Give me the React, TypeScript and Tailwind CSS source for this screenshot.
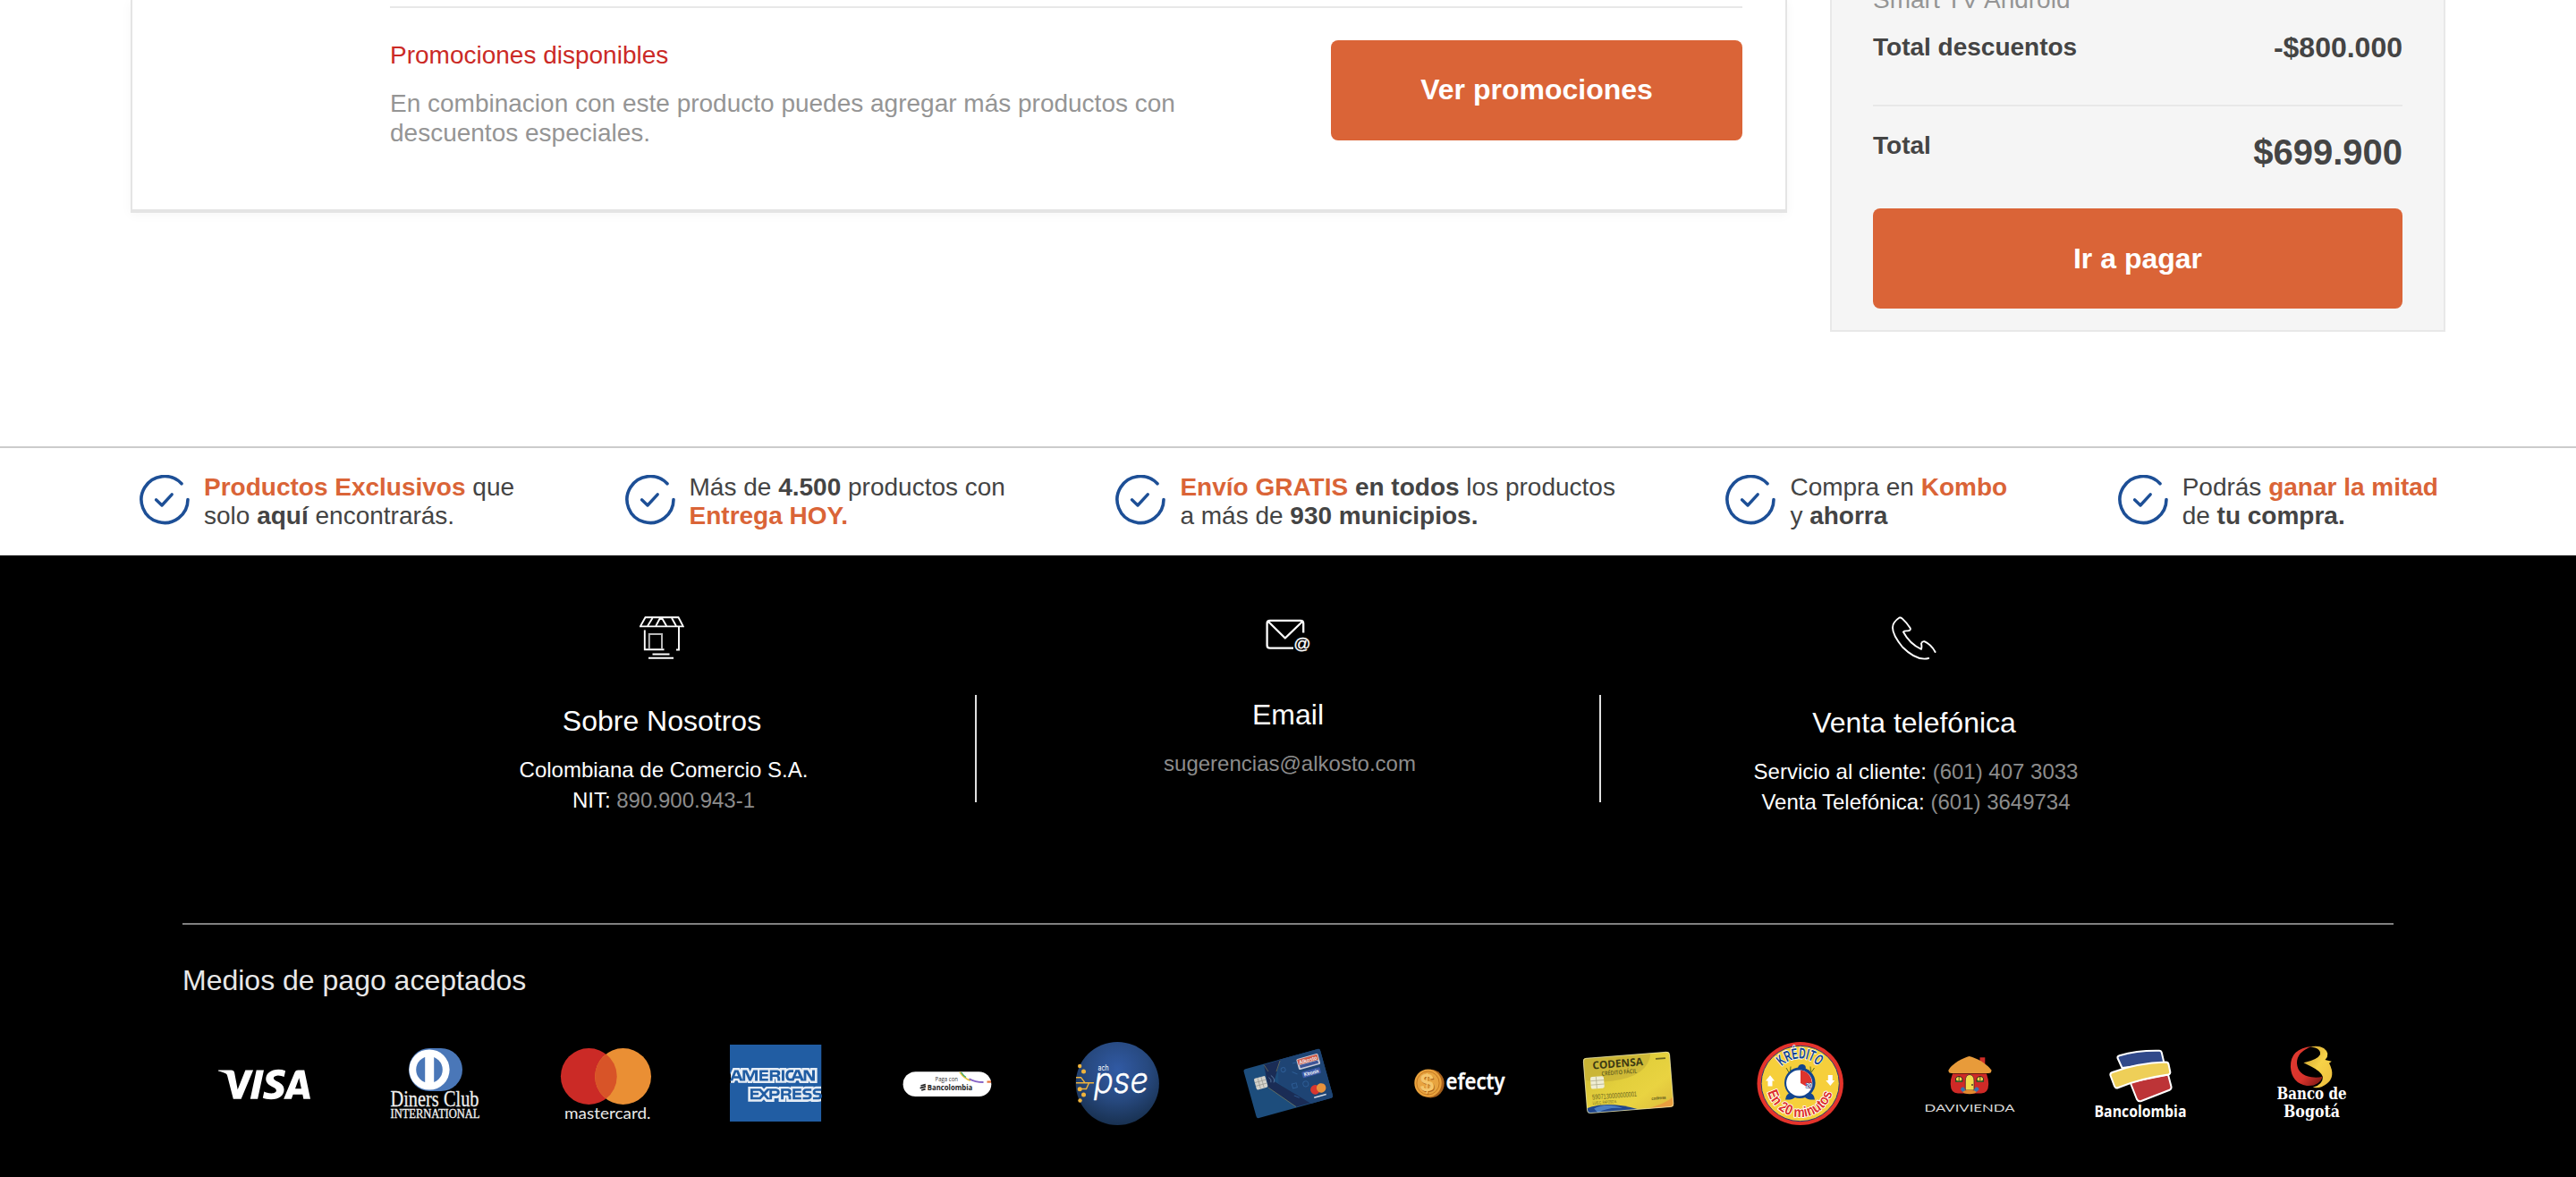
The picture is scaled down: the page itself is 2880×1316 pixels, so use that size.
import type { ReactNode } from "react";
import { SiVisa, SiAmericanexpress } from "react-icons/si";

function CheckIcon() {
  return (
    <svg className="mt-[3px] h-14 w-14 shrink-0" viewBox="0 0 56 56" fill="none" stroke="#1d4f96" strokeLinecap="round" strokeLinejoin="round">
      <path d="M47 9.8 A26 26 0 1 0 54 27.6" strokeWidth="3.6" />
      <path d="M18.5 27.8 L25 34 L36.2 21.8" strokeWidth="3.4" />
    </svg>
  );
}

function Benefit({ children }: { children: ReactNode }) {
  return (
    <li className="flex items-start gap-4">
      <CheckIcon />
      <p className="mt-px whitespace-nowrap text-[28px] leading-8">{children}</p>
    </li>
  );
}

function Accent({ children }: { children: ReactNode }) {
  return <b className="font-bold text-[#da6437]">{children}</b>;
}

function StoreIcon() {
  return (
    <svg className="h-12 w-[50px]" viewBox="0 0 50 48" fill="none" stroke="#fff" strokeWidth="1.9">
      <path d="M6.5 1.3H43.5L48.8 11.4H.9Z" />
      <path d="M14.5 2L9 11M23 2L18.2 11M25 2L30.2 11M36 2L41 11M24 2V4" />
      <path d="M5.8 15.5V37.2H27.5M44 12V37.5H41" />
      <path d="M10.8 36V20H25V36" stroke="#b8b8b8" strokeWidth="2" />
      <path d="M14.5 42.5H33.5M10 46.8H38" />
    </svg>
  );
}

function MailIcon() {
  return (
    <svg className="h-[42px] w-[50px]" viewBox="0 0 50 42" fill="none" stroke="#fff" strokeWidth="2.3" strokeLinejoin="round">
      <path d="M42.2 18.5V8Q42.2 4.8 39 4.8H4.8Q1.6 4.8 1.6 8V32.4Q1.6 35.6 4.8 35.6H31" />
      <path d="M3 6L21.8 24.5L41 6" />
      <text x="31.2" y="36.5" fontSize="19" fill="#fff" stroke="#fff" strokeWidth=".3" fontFamily="Liberation Sans, sans-serif">@</text>
    </svg>
  );
}

function PhoneIcon() {
  return (
    <svg className="h-[50px] w-[50px]" viewBox="0 0 50 50" fill="none" stroke="#fff" strokeWidth="1.9" strokeLinecap="round" strokeLinejoin="round">
      <path d="M41.2 47Q28 50.5 12 34.5Q-3.5 15.5 2.8 7Q5 3.800 8.300 1.700Q9.800 1 11.500 2.400Q17 7.500 20.500 13Q22 16 17.500 16.400Q14 16.200 12.900 17.500Q20 31 33 36.800Q33.800 34 33 30.500Q34 27.800 36.500 28.200Q44 31.500 48.600 40" />
    </svg>
  );
}

function Logo({ children, label }: { children: ReactNode; label: string }) {
  return (
    <li className="flex flex-1 justify-center">
      <svg className="h-[110px] w-[110px] overflow-visible" viewBox="0 0 110 110" role="img" aria-label={label}>
        {children}
      </svg>
    </li>
  );
}

function Visa() {
  return (
    <Logo label="Visa">
      <g transform="translate(3 5)">
        <SiVisa size={103} color="#fff" />
      </g>
    </Logo>
  );
}

function Diners() {
  return (
    <Logo label="Diners Club">
      <path d="M48 16H61A24 24 0 0 1 61 64H48A23 24 0 0 1 48 16Z" fill="#4a77b8" />
      <circle cx="48" cy="40" r="22.600" fill="#fff" />
      <circle cx="48" cy="40" r="14.800" fill="#4a77b8" />
      <rect x="43.200" y="24" width="10" height="32" fill="#fff" />
      <text x="4.500" y="81" fontFamily="Liberation Serif, serif" fontSize="24.500" fill="#eee" stroke="#eee" strokeWidth=".3" textLength="99" lengthAdjust="spacingAndGlyphs">Diners Club</text>
      <text x="4.500" y="93.500" fontFamily="Liberation Serif, serif" fontSize="14.500" fill="#eee" stroke="#eee" strokeWidth=".4" textLength="100" lengthAdjust="spacingAndGlyphs">INTERNATIONAL</text>
    </Logo>
  );
}

function Mastercard() {
  return (
    <Logo label="Mastercard">
      <circle cx="35.300" cy="47.500" r="31.400" fill="#cb2a26" />
      <circle cx="73.600" cy="47.500" r="31.400" fill="#ea8f34" />
      <path d="M54.450 22.600A31.400 31.400 0 0 1 54.450 72.400A31.400 31.400 0 0 1 54.450 22.600Z" fill="#d85428" />
      <text x="8" y="94.500" fontFamily="Lato, sans-serif" fontSize="18" fill="#e8e8e8" textLength="96.500" lengthAdjust="spacingAndGlyphs">mastercard.</text>
    </Logo>
  );
}

function Amex() {
  return (
    <Logo label="American Express">
      <defs>
        <clipPath id="amexClip">
          <rect x="3" y="12" width="103" height="86" />
        </clipPath>
      </defs>
      <g clipPath="url(#amexClip)">
        <rect x="4" y="30" width="101" height="55" fill="#e6edf5" />
        <g transform="translate(3 2.700)">
          <SiAmericanexpress size={103} color="#215da3" />
        </g>
      </g>
    </Logo>
  );
}

function BancolombiaPay() {
  return (
    <Logo label="Paga con Bancolombia">
      <rect x="5.600" y="42.300" width="98.700" height="27.800" rx="13.900" fill="#fff" />
      <text x="41.500" y="52.600" fontFamily="Open Sans, sans-serif" fontSize="7.800" fill="#333" textLength="25.500" lengthAdjust="spacingAndGlyphs">Paga con</text>
      <text x="32.800" y="62.800" fontFamily="Open Sans, sans-serif" fontWeight="700" fontSize="9.300" fill="#222" textLength="50.500" lengthAdjust="spacingAndGlyphs">Bancolombia</text>
      <path d="M25.500 58L30.800 56.600M24.600 60.600L31 58.900M26.200 63L30.600 61.600" stroke="#222" strokeWidth="1.700" />
      <path d="M69 42.800Q74 50 81 52.300" stroke="#e8c73a" strokeWidth="1.600" fill="none" />
      <path d="M70.500 42.800Q73 46.500 76 48.500" stroke="#3da66a" strokeWidth="1.300" fill="none" />
      <path d="M79.500 50.200Q86 54 95.500 54" stroke="#8461c5" strokeWidth="1.800" fill="none" />
      <path d="M99.500 53.600H104" stroke="#e8743b" strokeWidth="2.200" />
    </Logo>
  );
}

function Pse() {
  return (
    <Logo label="PSE">
      <defs>
        <radialGradient id="pse" cx=".5" cy=".33" r=".68">
          <stop offset="0" stopColor="#315aa4" />
          <stop offset=".55" stopColor="#27497f" />
          <stop offset="1" stopColor="#18304f" />
        </radialGradient>
      </defs>
      <circle cx="55.300" cy="55.500" r="46.600" fill="url(#pse)" />
      <g fill="#f0b43c">
        <circle cx="13.200" cy="36" r="2.200" />
        <circle cx="17.500" cy="42" r="2.500" />
        <circle cx="13.200" cy="61.800" r="2.500" />
        <circle cx="17.500" cy="68" r="2.500" />
        <circle cx="13.500" cy="74.500" r="2.200" />
      </g>
      <path d="M9 54.700H29M9 48.700H14.500L19 54.700M13 61.500H20.500L23.500 54.700" stroke="#f0b43c" strokeWidth="1.400" fill="none" />
      <text x="33.500" y="41" fontFamily="Inter, sans-serif" fontSize="9" fill="#fff" textLength="12" lengthAdjust="spacingAndGlyphs">ach</text>
      <text x="29" y="66" fontFamily="Inter, sans-serif" fontStyle="italic" fontWeight="300" fontSize="40" fill="#fff" stroke="#fff" strokeWidth=".4" textLength="61" lengthAdjust="spacingAndGlyphs">pse</text>
    </Logo>
  );
}

function AlkostoCard() {
  return (
    <Logo label="Tarjeta Alkosto">
      <g transform="translate(5 40) rotate(-15.500)">
        <rect width="88.700" height="56.800" rx="2.500" fill="#1d4d7c" />
        <path d="M40 0H86.200A2.500 2.500 0 0 1 88.700 2.500V54.300A2.500 2.500 0 0 1 86.200 56.800H62L34 25Z" fill="#1e4474" />
      </g>
      <path d="M28 34.500L46.400 29L39.500 53L79.700 77.300L64.400 81.600L33 60Z" fill="#1a2c55" />
      <path d="M28 34.500L33 42M33 60L64 81.500M46 30L42 42" stroke="#8a8a5c" strokeWidth=".6" fill="none" />
      <g transform="translate(5 40) rotate(-15.500)">
        <rect x="8.500" y="13" width="13" height="13" rx="1.500" fill="#d5d3cb" />
        <path d="M8.500 17.500H21.500M8.500 21.500H21.500M13 13V26M17 13V26" stroke="#8f8f8a" strokeWidth=".6" />
        <path d="M25 16Q28 19 26 22M28 14.500Q32 19 29 23" stroke="#56759d" strokeWidth=".9" fill="none" />
        <rect x="60" y="4.500" width="25" height="12.500" rx="1.500" fill="#c9cbd8" />
        <rect x="61" y="5.500" width="23" height="6" fill="#cf5a45" />
        <rect x="62" y="12" width="21" height="3.500" fill="#3e5597" />
        <text x="62" y="11" fontFamily="Liberation Sans, sans-serif" fontWeight="700" fontSize="6" fill="#eceaf0" textLength="21" lengthAdjust="spacingAndGlyphs">Alkosto</text>
        <rect x="62" y="20" width="21" height="7" rx="1" fill="#3a58a5" />
        <text x="64" y="25.600" fontFamily="Liberation Sans, sans-serif" fontWeight="700" fontSize="6" fill="#fff" textLength="17" lengthAdjust="spacingAndGlyphs">Ktronix</text>
        <circle cx="71.500" cy="43" r="5.300" fill="#d8372f" />
        <circle cx="78.500" cy="43" r="5.300" fill="#e8923c" />
        <path d="M68 51.200H82" stroke="#d6dbe5" strokeWidth="1.500" />
        <g stroke="#2d5c94" strokeWidth="1" fill="none">
          <circle cx="43" cy="12" r="2.500" />
          <circle cx="63" cy="34" r="3" />
          <rect x="48" y="30" width="5" height="5" />
          <path d="M52 17L57 21M47 43L52 47M55 8H60" />
        </g>
      </g>
    </Logo>
  );
}

function Efecty() {
  return (
    <Logo label="Efecty">
      <ellipse cx="23.500" cy="55.600" rx="15.200" ry="15.800" fill="#a8621d" />
      <ellipse cx="20.500" cy="55" rx="15.200" ry="15.500" fill="#e9a23c" />
      <ellipse cx="20.500" cy="55" rx="12.600" ry="13" fill="#e8a440" stroke="#c67a22" strokeWidth="1" />
      <text x="12.500" y="65" fontFamily="Liberation Sans, sans-serif" fontWeight="700" fontSize="28" fill="#a85f18">$</text>
      <text x="11.700" y="64.200" fontFamily="Liberation Sans, sans-serif" fontWeight="700" fontSize="28" fill="#f5c66c">$</text>
      <text x="40.500" y="62.300" fontFamily="Open Sans, sans-serif" fontWeight="600" fontSize="25" fill="#fff" stroke="#fff" strokeWidth=".4" textLength="66" lengthAdjust="spacingAndGlyphs">efecty</text>
    </Logo>
  );
}

function Codensa() {
  return (
    <Logo label="Codensa">
      <defs>
        <linearGradient id="codensa" x1="0" y1="0" x2="1" y2="1">
          <stop offset="0" stopColor="#cdb935" />
          <stop offset=".45" stopColor="#e3cf3c" />
          <stop offset=".7" stopColor="#e9d341" />
          <stop offset="1" stopColor="#dcbb3b" />
        </linearGradient>
        <clipPath id="codensaClip">
          <rect width="97.200" height="62" rx="3.500" />
        </clipPath>
      </defs>
      <g transform="translate(3.700 27.300) rotate(-4.500)">
        <g clipPath="url(#codensaClip)">
          <rect width="97.200" height="62" fill="url(#codensa)" />
          <path d="M0 0H76Q72 26 30 28Q10 28 0 24Z" fill="#c3ae35" opacity=".6" />
          <path d="M0 56Q22 49 58 62H0Z" fill="#20468d" />
          <path d="M8 57Q22 51 40 59Q24 56 12 62Z" fill="#4d7fc0" />
          <path d="M66 62Q88 58 97.200 51V62Z" fill="#e89e3f" />
        </g>
        <rect x=".3" y=".3" width="96.600" height="61.400" rx="3.500" fill="none" stroke="#efe9b6" strokeWidth=".7" />
        <text x="10" y="13" fontFamily="Open Sans, sans-serif" fontWeight="700" fontSize="12" fill="#3c3a12" textLength="56.500" lengthAdjust="spacingAndGlyphs">CODENSA</text>
        <text x="19.500" y="21" fontFamily="Open Sans, sans-serif" fontWeight="600" fontSize="6.500" fill="#5d581c" textLength="39.500" lengthAdjust="spacingAndGlyphs">CRÉDITO FÁCIL</text>
        <rect x="6.500" y="21.500" width="15" height="13.500" rx="2" fill="#efedd2" />
        <path d="M6.500 26H21.500M6.500 30.500H21.500M13 21.500V35" stroke="#aaa684" strokeWidth=".7" />
        <text x="7" y="47" fontFamily="Liberation Sans, sans-serif" fontSize="8" fill="#6c661e" textLength="50" lengthAdjust="spacingAndGlyphs">5907130000000001</text>
        <text x="7" y="52.500" fontFamily="Liberation Sans, sans-serif" fontSize="5" fill="#6c661e" textLength="27" lengthAdjust="spacingAndGlyphs">LUIS C. RAPOSO A.</text>
        <text x="73" y="52.500" fontFamily="Liberation Sans, sans-serif" fontWeight="700" fontSize="5" fill="#5d581c" textLength="16" lengthAdjust="spacingAndGlyphs">codensa</text>
        <path d="M81 7H92" stroke="#6c661e" strokeWidth="1.800" />
      </g>
    </Logo>
  );
}

function Kredito() {
  return (
    <Logo label="Krédito en 20 minutos">
      <defs>
        <path id="kreditoTop" d="M35.200 36.400A28 28 0 0 1 76.200 36.400" />
        <path id="kreditoBottom" d="M19.400 64.900A37.500 37.500 0 0 0 92 64.900" />
      </defs>
      <ellipse cx="55.700" cy="55.500" rx="48.200" ry="46.600" fill="#e5332b" />
      <ellipse cx="55.700" cy="55.500" rx="43.600" ry="42.200" fill="#f6cf3b" stroke="#283b72" strokeWidth="1" />
      <g fontFamily="Liberation Sans, sans-serif" fontWeight="700" strokeLinejoin="round">
        <text fontSize="17" fill="#12448e" stroke="#fff" strokeWidth="1.800" paintOrder="stroke" textLength="45" lengthAdjust="spacingAndGlyphs">
          <textPath href="#kreditoTop">KRÉDITO</textPath>
        </text>
        <text fontSize="16" fill="#dd2f29" stroke="#fff" strokeWidth="1.800" paintOrder="stroke" textLength="97" lengthAdjust="spacingAndGlyphs">
          <textPath href="#kreditoBottom">En 20 minutos</textPath>
        </text>
      </g>
      <g fill="#12448e">
        <circle cx="55.300" cy="54.700" r="17.300" />
        <path d="M53 38Q54 33.500 58.500 34Q63 35 61.500 40Z" />
        <path d="M39 73.500Q40 65 47 66L50 71Q47 74 39 73.500ZM72 73.500Q71 65 64 66L61 71Q64 74 72 73.500Z" />
        <path d="M40 38L43 43M45 36.500L44.500 42M71.500 38L68 43M67 36.500L67.500 42" stroke="#59701f" strokeWidth="1" />
      </g>
      <circle cx="54.700" cy="55" r="14.600" fill="#fff" />
      <path d="M56 55V40.400A14.600 14.600 0 0 1 67.300 61.500Z" fill="#df342d" />
      <text x="62" y="59.500" fontFamily="Liberation Sans, sans-serif" fontWeight="700" fontSize="6.500" fill="#fff" stroke="#12448e" strokeWidth="1" paintOrder="stroke">20</text>
      <path d="M22 46.300L27 52.500H24.500V58.500H19.500V52.500H17ZM89.300 58L94.300 52H91.800V46H86.800V52H84.300Z" fill="#fff" />
    </Logo>
  );
}

function Davivienda() {
  return (
    <Logo label="Davivienda">
      <rect x="66.500" y="26.300" width="5.800" height="9" fill="#cf2d27" />
      <path d="M36 44.500Q33.500 51 33.700 56Q34 66.500 42 66.500H68Q76 66.500 76.200 56Q76.200 51 74 44.500Z" fill="#cf2a27" />
      <path d="M31.500 40.500Q33 36.500 42 30.500Q50 26 54.600 25Q60 26 68 30.500Q77 36.500 79.400 40.500Q79.800 44 76 44H35Q31 44 31.500 40.500Z" fill="#e89b3a" />
      <path d="M50.300 63V52Q50.500 46 55 45.500Q59.800 46 60 52V63Z" fill="#f3dc4d" stroke="#4a2430" strokeWidth=".8" />
      <circle cx="58" cy="57" r=".9" fill="#3b2a26" />
      <path d="M39.500 50Q40 47.500 43 47.500Q46 47.500 47 50V53.500H39.500ZM63 50Q64 47.500 67 47.500Q70 47.500 70.500 50V53.500H63Z" fill="#f0da4a" stroke="#33241f" strokeWidth="1" />
      <path d="M43.200 47.500V53.500M66.800 47.500V53.500" stroke="#33241f" strokeWidth=".8" />
      <path d="M39.500 51Q43 54 47 51V54H39.500ZM63 51Q67 54 70.500 51V54H63Z" fill="#3f5b2a" />
      <path d="M45 62.500Q45 59 48.500 59.500L50.500 63L48 65.500ZM65.500 62.500Q65.500 59 62 59.500L59.500 63L62 65.500Z" fill="#3676b0" />
      <ellipse cx="55" cy="65" rx="7.500" ry="2.200" fill="#e28a2f" />
      <text x="4.500" y="86.700" fontFamily="Lato, sans-serif" fontSize="11.800" fill="#d8d8d8" textLength="101" lengthAdjust="spacingAndGlyphs">DAVIVIENDA</text>
    </Logo>
  );
}

function Bancolombia() {
  return (
    <Logo label="Bancolombia">
      <g stroke="#fff" strokeWidth="2" strokeLinejoin="round">
        <path d="M31.500 24.200Q52 18.300 76 18.800Q78.200 18.800 78.800 21L81.500 32.500L34.500 38L29.500 27Q29 25 31.500 24.200Z" fill="#31498a" />
        <path d="M43.500 54L86 45.500L89.500 59Q90 61.500 87.500 62.800L56 75Q52.500 76 51 73Z" fill="#bd3437" />
        <path d="M23.500 43Q52 32.500 83.500 31.600Q86 31.600 86.500 34L88.300 42.500Q88.700 45 86 45.600Q55 50 30.500 60Q27 61.500 25.800 58L21.500 46.500Q20.800 44 23.500 43Z" fill="#eecf58" />
      </g>
      <text x="3.500" y="92.700" fontFamily="Open Sans, sans-serif" fontWeight="700" fontSize="18" fill="#fff" textLength="103" lengthAdjust="spacingAndGlyphs">Bancolombia</text>
    </Logo>
  );
}

function BancoDeBogota() {
  return (
    <Logo label="Banco de Bogotá">
      <defs>
        <linearGradient id="bogotaRed" x1="0" y1="0" x2="1" y2="1">
          <stop offset="0" stopColor="#e23b30" />
          <stop offset=".6" stopColor="#d8332c" />
          <stop offset="1" stopColor="#6d1511" />
        </linearGradient>
        <linearGradient id="bogotaGold" x1="0" y1="0" x2="1" y2="1">
          <stop offset="0" stopColor="#c99a2c" />
          <stop offset=".5" stopColor="#f7d248" />
          <stop offset="1" stopColor="#eebd3c" />
        </linearGradient>
      </defs>
      <path d="M56 14Q31.500 16 31.900 37Q33 55 50 58Q64 59 68 47.500Q62 49.500 55 48.300Q40 46 39 33Q38.500 20 56 14Z" fill="url(#bogotaRed)" />
      <path d="M54 14.400Q63 12.500 69 16Q77 22 70.500 29L77.800 30.800L75 32.800Q83 48 72 56Q65 61.500 56.800 59.800Q68 57 68 48Q66 42 55 36.500L46.400 32.300Q62 29 65 23Q66 15.500 54 14.400Z" fill="url(#bogotaGold)" />
      <g fontFamily="DejaVu Serif, serif" fontWeight="700" fontSize="18.300" fill="#fff">
        <text x="16.500" y="73.300" textLength="78" lengthAdjust="spacingAndGlyphs">Banco de</text>
        <text x="24" y="92.700" textLength="63" lengthAdjust="spacingAndGlyphs">Bogotá</text>
      </g>
    </Logo>
  );
}

function PromotionsCard() {
  return (
    <section className="h-[238px] w-[1852px] border-x-2 border-b-4 border-[#e4e4e4] bg-white pl-[288px] pr-12 pt-[7px] shadow-[0_2px_12px_rgba(0,0,0,0.04)]">
      <div className="h-0.5 bg-[#e8e8e8]" />
      <div className="mt-9 flex items-start justify-between">
        <div className="w-[900px] text-[28px]">
          <h2 className="mt-px leading-8 text-[#cb2a26]">Promociones disponibles</h2>
          <p className="mt-[21px] leading-[33px] text-[#959595]">
            En combinacion con este producto puedes agregar más productos con descuentos especiales.
          </p>
        </div>
        <button className="h-28 w-[460px] rounded-lg bg-[#da6437] pb-0.5 text-[32px] font-bold text-white">Ver promociones</button>
      </div>
    </section>
  );
}

function OrderSummary() {
  return (
    <aside className="h-[371px] w-[688px] border-2 border-t-0 border-[#e8e8e8] bg-[#f5f5f5] px-[46px] font-bold">
      <p className="-mt-4 text-[28px] font-normal leading-8 text-[#959595]">Smart TV Android</p>
      <div className="mt-[19px] flex items-start justify-between">
        <span className="mt-0.5 text-[28px] leading-8">Total descuentos</span>
        <span className="text-[32px] leading-9">-$800.000</span>
      </div>
      <div className="mt-[46px] h-0.5 bg-[#e8e8e8]" />
      <div className="mt-[27px] flex items-start justify-between">
        <span className="mt-px text-[28px] leading-8">Total</span>
        <span className="mt-0.5 text-[40px] leading-[44px]">$699.900</span>
      </div>
      <button className="mt-[41px] h-28 w-full rounded-lg bg-[#da6437] text-[32px] font-bold text-white">Ir a pagar</button>
    </aside>
  );
}

export default function App() {
  return (
    <div className="h-[1316px] w-[2880px] overflow-hidden bg-white font-['Liberation_Sans',Arial,sans-serif] text-[#444]">
      <main className="flex h-[499px] items-start gap-12 overflow-hidden pl-[146px]">
        <PromotionsCard />
        <OrderSummary />
      </main>

      <ul className="flex h-[122px] gap-[123.5px] border-t-2 border-[#ccc] pl-[156px] pt-[27px]">
        <Benefit>
          <Accent>Productos Exclusivos</Accent> que
          <br />
          solo <b>aquí</b> encontrarás.
        </Benefit>
        <Benefit>
          Más de <b>4.500</b> productos con
          <br />
          <Accent>Entrega HOY.</Accent>
        </Benefit>
        <Benefit>
          <Accent>Envío GRATIS</Accent> <b>en todos</b> los productos
          <br />a más de <b>930 municipios.</b>
        </Benefit>
        <Benefit>
          Compra en <Accent>Kombo</Accent>
          <br />y <b>ahorra</b>
        </Benefit>
        <Benefit>
          Podrás <Accent>ganar la mitad</Accent>
          <br />
          de <b>tu compra.</b>
        </Benefit>
      </ul>

      <footer className="h-[695px] bg-black pt-[68px] text-white">
        <div className="flex h-[343px] justify-center text-center text-2xl leading-[34px]">
          <section className="flex w-[700px] flex-col items-center">
            <StoreIcon />
            <h3 className="mt-[50px] text-[32px] leading-[38px]">Sobre Nosotros</h3>
            <p className="mt-[19px] pl-1">
              Colombiana de Comercio S.A.
              <br />
              NIT: <span className="text-[#8c8c8c]">890.900.943-1</span>
            </p>
          </section>
          <div className="-mr-0.5 mt-[88px] h-[120px] w-0.5 bg-[#e0e0e0]" />
          <section className="flex w-[700px] flex-col items-center">
            <MailIcon />
            <h3 className="mt-[49px] text-[32px] leading-[38px]">Email</h3>
            <p className="mt-[19px] pl-1 text-[#8c8c8c]">sugerencias@alkosto.com</p>
          </section>
          <div className="-ml-0.5 mt-[88px] h-[120px] w-0.5 bg-[#e0e0e0]" />
          <section className="flex w-[700px] flex-col items-center">
            <PhoneIcon />
            <h3 className="mt-[50px] text-[32px] leading-[38px]">Venta telefónica</h3>
            <p className="mt-[19px] pl-1">
              Servicio al cliente: <span className="text-[#8c8c8c]">(601) 407 3033</span>
              <br />
              Venta Telefónica: <span className="text-[#8c8c8c]">(601) 3649734</span>
            </p>
          </section>
        </div>

        <div className="mx-[204px]">
          <div className="h-0.5 bg-[#808080]" />
          <h3 className="mt-[43px] text-[32px] leading-[38px] text-[#e8e8e8]">Medios de pago aceptados</h3>
          <ul className="-mx-[3px] mt-[41px] flex">
            <Visa />
            <Diners />
            <Mastercard />
            <Amex />
            <BancolombiaPay />
            <Pse />
            <AlkostoCard />
            <Efecty />
            <Codensa />
            <Kredito />
            <Davivienda />
            <Bancolombia />
            <BancoDeBogota />
          </ul>
        </div>
      </footer>
    </div>
  );
}
